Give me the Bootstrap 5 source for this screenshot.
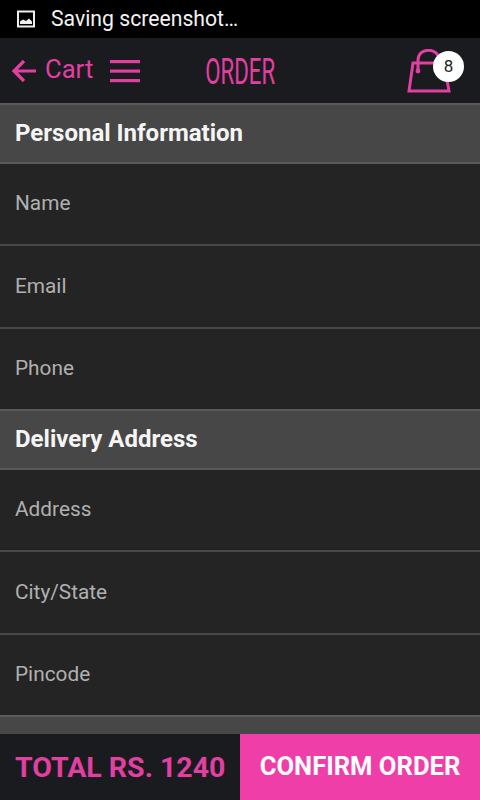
<!DOCTYPE html>
<html lang="en"><head><meta charset="utf-8">
<link href="https://cdn.jsdelivr.net/npm/bootstrap@5.3.0/dist/css/bootstrap.min.css" rel="stylesheet">
<style>
html,body{height:800px;overflow:hidden;background:#242424;font-family:Roboto,sans-serif}
.shell{height:800px;width:480px;overflow:hidden}
.status{height:38px;background:#000;color:#f2f2f2;font-size:21.2px;padding-left:17px;gap:15px}
.topbar{height:65px;background:#1a1b1f;color:#e23fa2;padding-left:11px;padding-right:16px;flex:none}
.back{font-size:25.6px;line-height:1;margin-left:8px;margin-top:-2px}
.burger{margin-left:17px}
.brand-title{left:0;width:480px;text-align:center;top:1px;font-family:Roboto,sans-serif;font-weight:400;font-size:37px;line-height:65px;color:#e23fa2;pointer-events:none}
.brand-title span{display:inline-block;transform:scaleX(.6)}
.bag{margin-right:13px}
.count{width:31px;height:31px;background:#fff;color:#222;font-size:17px;top:13px;right:16px}
.sec{height:61px;background:#474747;border-top:2px solid #5a5a5a;border-bottom:2px solid #5a5a5a;color:#f5f5f5;font-weight:700;font-size:24px;padding-left:15px;padding-bottom:2px}
.fld{height:82px;background:#242424;color:#b0b0b0;font-size:20.8px;padding-left:15px;border-bottom:2px solid #484848}
.fld.tall{height:83px;padding-top:1px}
.fld.end{height:80px;border-bottom:0}
.foot{height:66px;flex:none}
.tot{width:240px;background:#1a1b1f;color:#e23fa2;font-weight:700;font-size:28.5px;padding-left:15px;padding-top:2px}
.conf{width:240px;background:#f03ea8;color:#fff;font-weight:700;font-size:25.6px;border-radius:0;border:0;padding:0 0 2px}
.conf:hover{background:#f03ea8;color:#fff}
.body-scroll{flex:1 1 0;overflow:hidden}
</style></head><body>
<div class="shell d-flex flex-column">
 <div class="status d-flex align-items-center">
  <svg width="19" height="19" viewBox="0 0 19 19"><rect x="1" y="1.5" width="16" height="15" fill="#000" stroke="#eee" stroke-width="2"/><path d="M3 14V11.5L6 9.5L9 11L12 8.5L15 11.5V14Z" fill="#eee"/></svg>
  <span>Saving screenshot…</span>
 </div>
 <div class="topbar d-flex align-items-center position-relative">
  <svg width="26" height="26" viewBox="0 0 26 26" fill="none" stroke="#e23fa2" stroke-width="3.2"><path d="M25 13H3M13 3L3 13L13 23"/></svg>
  <span class="back">Cart</span>
  <svg class="burger" width="30" height="24" viewBox="0 0 30 24" fill="#e23fa2"><rect y="1" width="30" height="3.2"/><rect y="10.5" width="30" height="3.2"/><rect y="20" width="30" height="3.2"/></svg>
  <div class="brand-title position-absolute"><span>ORDER</span></div>
  <svg class="bag ms-auto" width="44" height="44" viewBox="0 0 44 44" fill="none" stroke="#e23fa2" stroke-width="3"><path d="M6 14H37L42 42H2Z"/><path d="M11 22V11C11 -2 32 -2 32 11"/><circle cx="11" cy="22" r="2.4" fill="#e23fa2" stroke="none"/></svg>
  <span class="count position-absolute rounded-circle d-flex align-items-center justify-content-center">8</span>
 </div>
 <div class="body-scroll">
  <div class="sec d-flex align-items-center">Personal Information</div>
  <div class="fld d-flex align-items-center">Name</div>
  <div class="fld tall d-flex align-items-center">Email</div>
  <div class="fld end d-flex align-items-center">Phone</div>
  <div class="sec d-flex align-items-center">Delivery Address</div>
  <div class="fld d-flex align-items-center">Address</div>
  <div class="fld tall d-flex align-items-center">City/State</div>
  <div class="fld end d-flex align-items-center">Pincode</div>
  <div class="sec"></div>
 </div>
 <div class="foot d-flex">
  <div class="tot d-flex align-items-center">TOTAL RS. 1240</div>
  <button class="conf btn">CONFIRM ORDER</button>
 </div>
</div>
</body></html>
